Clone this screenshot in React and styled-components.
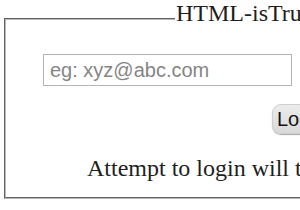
import React from 'react'
import styled, { createGlobalStyle } from 'styled-components'

const GlobalStyle = createGlobalStyle`
  html, body {
    margin: 0;
    padding: 0;
    overflow: hidden;
    background: #fff;
  }
`

const Frame = styled.fieldset`
  width: 620px;
  margin: 0 0 0 4px;
  padding: 0 0 15px 37px;
  border: 2px groove #b8b8b8;
  display: flex;
  flex-direction: column;
  align-items: flex-start;
  font-family: "Liberation Serif", "Times New Roman", serif;
  color: #1e1e1e;
`

const Title = styled.legend`
  margin-left: 132px;
  padding: 0 0 10px 1px;
  font-size: 24px;
  line-height: normal;
`

const EmailInput = styled.input`
  box-sizing: border-box;
  width: 249px;
  height: 32px;
  margin-top: 17px;
  padding: 0 6px;
  border: 1px solid #b4b4b4;
  font-family: "Liberation Sans", Arial, sans-serif;
  font-size: 20px;
  color: #222;
  outline: none;

  &::placeholder {
    color: #858585;
  }
`

const ButtonRow = styled.div`
  margin-top: 18px;
  padding-left: 229px;
`

const LoginButton = styled.button`
  box-sizing: border-box;
  height: 30px;
  padding: 0 10px 0 4px;
  border: 1px solid #cfcfcf;
  border-radius: 9px;
  background: linear-gradient(#ececec, #d9d9d9);
  box-shadow: 0 1px 1px rgba(0, 0, 0, 0.35);
  font-family: "Liberation Sans", Arial, sans-serif;
  font-size: 20px;
  color: #111;
`

const Note = styled.p`
  margin: 21px 0 0 44px;
  font-size: 24px;
  line-height: normal;
  white-space: nowrap;
`

export default function App () {
  return (
    <>
      <GlobalStyle />
      <Frame>
        <Title>HTML-isTrusted</Title>
        <EmailInput type="email" placeholder="eg: xyz@abc.com" />
        <ButtonRow>
          <LoginButton>Login</LoginButton>
        </ButtonRow>
        <Note>Attempt to login will trigger the isTrusted check.</Note>
      </Frame>
    </>
  )
}
